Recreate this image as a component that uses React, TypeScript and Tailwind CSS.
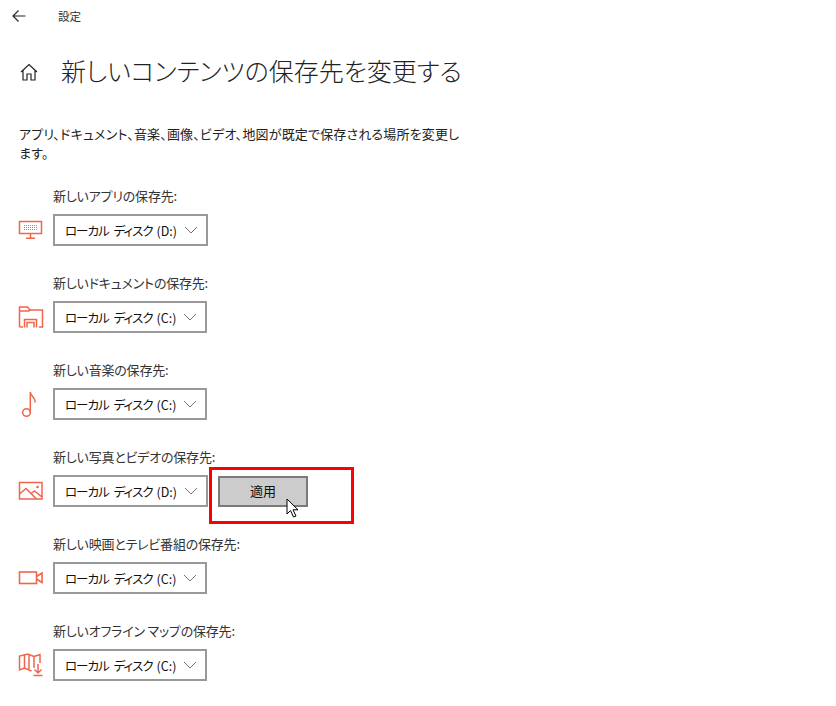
import type { ReactNode } from 'react'

const ICON = '#f0654c'

function AppsIcon() {
  return (
    <svg width="26" height="20" viewBox="0 0 26 20" fill="none" stroke={ICON} strokeWidth="1.5">
      <rect x="1.5" y="1.5" width="22" height="12" />
      <path d="M12.5 14v4M8 18.2h9" />
      <path d="M6 5.5h13M6 7.5h13M6 9.5h13" strokeDasharray="1 1" strokeWidth="1.1" />
    </svg>
  )
}

function FolderIcon() {
  return (
    <svg width="26" height="22" viewBox="0 0 26 22" fill="none" stroke={ICON} strokeWidth="1.5">
      <path d="M1.5 21V1h8l2.5 3h12.5v17h-3.5" />
      <path d="M1.5 5h9l2-1" />
      <path d="M1.5 21h3.5M6.5 21.5v-8h12v8M9 21.5v-5h7v5" />
    </svg>
  )
}

function MusicIcon() {
  return (
    <svg width="26" height="27" viewBox="0 0 26 27" fill="none" stroke={ICON} strokeWidth="1.5">
      <circle cx="8.5" cy="21.5" r="3.8" />
      <path d="M12.3 21.5V1c0 4 5 5 5 10.5" />
    </svg>
  )
}

function PhotoIcon() {
  return (
    <svg width="26" height="20" viewBox="0 0 26 20" fill="none" stroke={ICON} strokeWidth="1.5">
      <rect x="1.5" y="1.5" width="22.5" height="16.5" />
      <path d="M1.5 13l6.5-5.5 10.5 10.5M13 12.5l3.5-2.5 7.5 6" />
      <circle cx="19.5" cy="6" r="0.6" />
    </svg>
  )
}

function VideoIcon() {
  return (
    <svg width="26" height="16" viewBox="0 0 26 16" fill="none" stroke={ICON} strokeWidth="1.6">
      <rect x="1.5" y="2" width="17" height="11.5" />
      <path d="M18.5 6.5L24 3v9.5l-5.5-3.5" />
    </svg>
  )
}

function MapIcon() {
  return (
    <svg width="26" height="24" viewBox="0 0 26 24" fill="none" stroke={ICON} strokeWidth="1.5">
      <path d="M16 15V3.5L10 1 1.5 3v14l5-2 7 3" />
      <path d="M6.5 1.5V15M11 1v15" />
      <path d="M16 3.5l6-2V10" />
      <path d="M20 11v9M16.5 16.5L20 20l3.5-3.5M15.5 22.5h9" />
    </svg>
  )
}

const rows: { label: string; drive: string; icon: ReactNode; apply?: boolean }[] = [
  { label: '新しいアプリの保存先:', drive: '(D:)', icon: <AppsIcon /> },
  { label: '新しいドキュメントの保存先:', drive: '(C:)', icon: <FolderIcon /> },
  { label: '新しい音楽の保存先:', drive: '(C:)', icon: <MusicIcon /> },
  { label: '新しい写真とビデオの保存先:', drive: '(D:)', icon: <PhotoIcon />, apply: true },
  { label: '新しい映画とテレビ番組の保存先:', drive: '(C:)', icon: <VideoIcon /> },
  { label: '新しいオフライン マップの保存先:', drive: '(C:)', icon: <MapIcon /> },
]

export default function App() {
  return (
    <div className="h-[706px] w-[836px] overflow-hidden bg-white text-[#111] [font-family:'Noto_Sans_CJK_JP',sans-serif] [font-feature-settings:'palt']">
      <header className="flex h-[32px] items-center pl-[12px]">
        <svg width="14" height="14" viewBox="0 0 14 14" fill="none" stroke="#222" strokeWidth="1.1">
          <path d="M13.5 7H1M6.5 1.5L1 7l5.5 5.5" />
        </svg>
        <span className="ml-[32px] mt-[2px] text-[11.5px] text-[#333]">設定</span>
      </header>

      <div className="mt-[16px] flex h-[46px] items-center pl-[20px]">
        <svg width="18" height="18" viewBox="0 0 18 18" fill="none" stroke="#222" strokeWidth="1.2" className="mt-[2px]">
          <path d="M1 9l8-7.5L17 9M3 7.5V17h4v-6h4v6h4V7.5" />
        </svg>
        <h1 className="ml-[23px] -mt-[2px] text-[25px] leading-none font-light whitespace-nowrap text-[#222]">
          新しいコンテンツの保存先を変更する
        </h1>
      </div>

      <p className="mt-[30px] ml-[19px] w-[445px] text-[13px] leading-[19px] tracking-[0.17px] text-[#222]">
        アプリ、ドキュメント、音楽、画像、ビデオ、地図が既定で保存される場所を変更します。
      </p>

      <div className="mt-[23px] flex flex-col gap-[26px] pl-[18px]">
        {rows.map((row) => (
          <div key={row.label} className="flex flex-col">
            <span className="ml-[35px] h-[29px] text-[13px] leading-[22px] tracking-[-0.2px] whitespace-nowrap text-[#333]">{row.label}</span>
            <div className="flex items-center">
              <span className="flex w-[35px] items-center">{row.icon}</span>
              <div className={`flex h-[32px] items-center justify-between border-2 border-[#999] pr-[8px] pl-[10px] text-[#111] ${row.drive === '(D:)' ? 'w-[155px]' : 'w-[154px]'}`}>
                <span className="-mt-[3px] whitespace-nowrap">
                  <span className="text-[12.5px] tracking-[-1px] [word-spacing:3px]">ローカル ディスク</span>
                  <span className="ml-[4px] text-[12.5px]">{row.drive}</span>
                </span>
                <svg width="14" height="8" viewBox="0 0 14 8" fill="none" stroke="#777" strokeWidth="1">
                  <path d="M1 1l6 6 6-6" />
                </svg>
              </div>
              {row.apply && (
                <div className="relative ml-[10px] flex h-[31px] w-[90px] items-center justify-center self-end border-2 border-[#7a7a7a] bg-[#cccccc] text-[13px] text-[#111]">
                  <span className="-mt-[1px]">適用</span>
                  <div className="absolute top-[-11px] left-[-11px] h-[57px] w-[145px] border-[3px] border-[#ff0000]" />
                  <svg width="14" height="21" viewBox="0 0 14 21" className="absolute top-[20px] left-[66px]">
                    <path d="M1 1v15l3.5-3.5 3 6.5 2.5-1-3-6.2H12z" fill="#fff" stroke="#000" strokeWidth="1" />
                  </svg>
                </div>
              )}
            </div>
          </div>
        ))}
      </div>
    </div>
  )
}
